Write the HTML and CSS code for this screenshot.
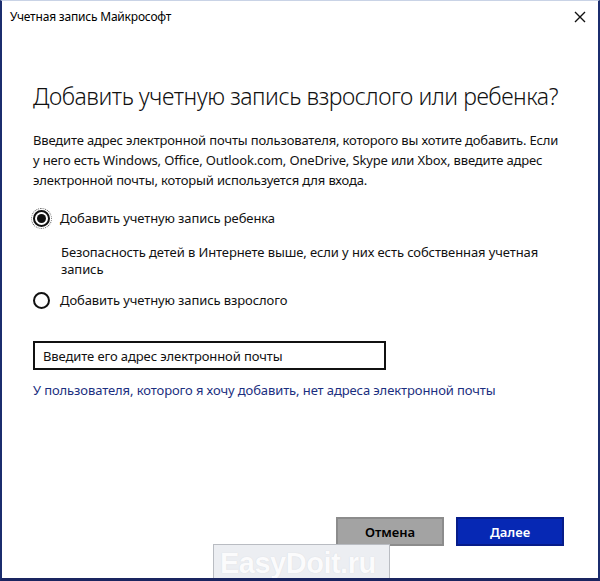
FILE: index.html
```html
<!DOCTYPE html>
<html lang="ru">
<head>
<meta charset="utf-8">
<link rel="stylesheet" href="styles.css">
</head>
<body>
<div class="window">
  <div class="titlebar">
    <span class="title">Учетная запись Майкрософт</span>
    <svg class="close" width="12" height="12" viewBox="0 0 12 12"><path d="M1 1 L11 11 M11 1 L1 11" stroke="#111" stroke-width="1.4" fill="none"/></svg>
  </div>
  <div class="content">
    <h1 class="heading">Добавить учетную запись взрослого или ребенка?</h1>
    <p class="intro">Введите адрес электронной почты пользователя, которого вы хотите добавить. Если у него есть Windows, Office, Outlook.com, OneDrive, Skype или Xbox, введите адрес электронной почты, который используется для входа.</p>
    <div class="option">
      <span class="radio checked"><span class="dot"></span></span>
      <span class="label">Добавить учетную запись ребенка</span>
    </div>
    <p class="desc">Безопасность детей в Интернете выше, если у них есть собственная учетная запись</p>
    <div class="option second">
      <span class="radio"></span>
      <span class="label">Добавить учетную запись взрослого</span>
    </div>
    <div class="input">Введите его адрес электронной почты</div>
    <a class="link" href="#">У пользователя, которого я хочу добавить, нет адреса электронной почты</a>
    <div class="buttons">
      <button class="btn cancel">Отмена</button>
      <button class="btn next">Далее</button>
    </div>
  </div>
  <div class="watermark">EasyDoit.ru</div>
</div>
</body>
</html>
```

FILE: styles.css
```css
* { box-sizing: border-box; }
html, body { margin: 0; padding: 0; background: #fff; }
body { font-family: "Noto Sans", "Open Sans", sans-serif; color: #111; }
.window {
  position: relative;
  width: 600px;
  height: 581px;
  border-left: 2px solid #1b2d6e;
  border-right: 2px solid #1b2d6e;
  border-bottom: 3px solid #1a2560;
  border-top: 1px solid #c9d3e6;
  display: flex;
  flex-direction: column;
  overflow: hidden;
}
.titlebar {
  height: 31px;
  display: flex;
  align-items: center;
  justify-content: space-between;
  padding: 0 12px 0 8px;
}
.title { font-size: 12px; letter-spacing: -0.2px; color: #000; }
.close { display: block; }
.content {
  flex: 1;
  display: flex;
  flex-direction: column;
  padding: 0 33px 0 31px;
}
.heading {
  margin: 48px 0 0;
  font-weight: 300;
  font-size: 23px;
  line-height: 32px;
  letter-spacing: -0.45px;
  white-space: nowrap;
  color: #111;
}
.intro {
  margin: 18px 0 0;
  font-size: 13px;
  line-height: 20px;
  letter-spacing: -0.15px;
}
.option {
  margin-top: 19px;
  display: flex;
  align-items: center;
  gap: 10px;
  font-size: 13px;
  letter-spacing: -0.1px;
}
.option.second { margin-top: 13px; }
.radio {
  width: 17px;
  height: 17px;
  border: 2px solid #111;
  border-radius: 50%;
  display: flex;
  align-items: center;
  justify-content: center;
  flex: none;
}
.radio.checked { outline: 1px dotted #555; outline-offset: 1px; }
.dot { width: 9px; height: 9px; border-radius: 50%; background: #111; }
.desc {
  margin: 17px 0 0 28px;
  font-size: 13px;
  line-height: 17px;
  letter-spacing: -0.1px;
}
.input {
  margin-top: 32px;
  width: 353px;
  height: 29px;
  border: 2px solid #111;
  padding: 0 8px;
  display: flex;
  align-items: center;
  font-size: 13px;
  letter-spacing: -0.1px;
}
.link {
  margin-top: 11px;
  font-size: 13px;
  letter-spacing: -0.1px;
  color: #1b2f80;
  text-decoration: none;
}
.buttons {
  margin-top: auto;
  margin-bottom: 32px;
  display: flex;
  justify-content: flex-end;
  gap: 12px;
  padding-right: 1px;
}
.btn {
  width: 108px;
  height: 29px;
  font-family: inherit;
  font-size: 13px;
  font-weight: 600;
  border: 2px solid;
}
.cancel { background: #a3a3a3; border-color: #8c8c8c; color: #000; }
.next { background: #0628b4; border-color: #061c8a; color: #fff; }
.watermark {
  position: absolute;
  left: 211px;
  top: 543px;
  width: 177px;
  height: 40px;
  background: #eceef2;
  border: 1px solid #b9bcc2;
  font-family: "Liberation Sans", sans-serif;
  font-weight: bold;
  font-size: 29px;
  line-height: 36px;
  letter-spacing: -0.5px;
  padding-left: 6px;
  color: #fbfbfc;
  text-shadow: 0 0 1px #d0d3d8;
  white-space: nowrap;
}
```
